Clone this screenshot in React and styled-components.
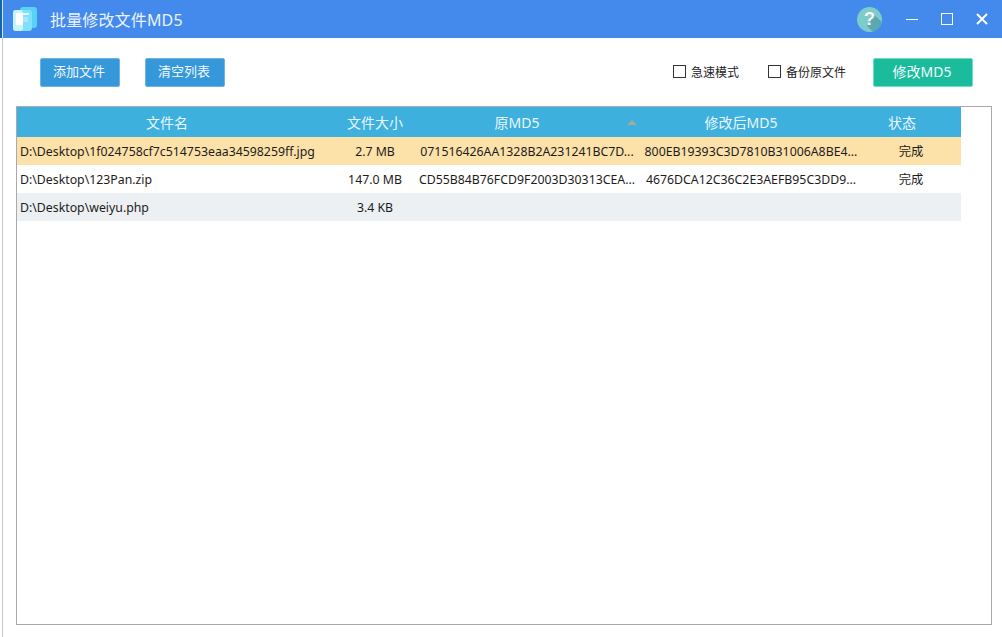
import React from "react";
import styled, { createGlobalStyle } from "styled-components";

const GlobalStyle = createGlobalStyle`
  html, body {
    margin: 0;
    padding: 0;
    background: #fff;
  }
  body {
    font-family: "Noto Sans", "Noto Sans CJK SC", sans-serif;
    color: #1c1c1c;
  }
`;

const Page = styled.div`
  width: 1002px;
  height: 637px;
  display: flex;
  overflow: hidden;
`;

const Edge = styled.div`
  width: 3px;
  flex: none;
  display: flex;
  flex-direction: column;
`;

const EdgeTop = styled.div`
  height: 38px;
  background: linear-gradient(to right, #1268a8 2px, #d8e6f4 2px);
`;

const EdgeRest = styled.div`
  flex: 1;
  background: linear-gradient(to right, #fff 2px, #c9c9c9 2px);
`;

const Main = styled.div`
  flex: 1;
  display: flex;
  flex-direction: column;
`;

const TitleBar = styled.div`
  height: 38px;
  background: #448aec;
  display: flex;
  align-items: center;
  color: #fff;
`;

const LogoBox = styled.div`
  width: 26px;
  height: 26px;
  margin-left: 9px;
  display: flex;
`;

const Title = styled.div`
  margin-left: 12px;
  font-size: 16px;
  letter-spacing: 0.15px;
  flex: 1;
  color: #eaf3ff;
`;

const HelpBadge = styled.div`
  width: 25px;
  height: 25px;
  border-radius: 50%;
  overflow: hidden;
  position: relative;
  background: #7dcccb;
  display: flex;
  align-items: center;
  justify-content: center;
  margin-right: 12px;
`;

const HelpMark = styled.span`
  position: relative;
  font-family: "Liberation Sans", sans-serif;
  font-size: 18px;
  font-weight: 700;
  color: #fff;
`;

const HelpShadow = styled.svg`
  position: absolute;
  inset: 0;
`;

const WinButton = styled.button`
  width: 35px;
  height: 38px;
  padding: 0;
  border: 0;
  background: none;
  display: flex;
  align-items: center;
  justify-content: center;
`;

const WinButtons = styled.div`
  display: flex;
  margin-right: 3px;
`;

const Toolbar = styled.div`
  height: 68px;
  display: flex;
  align-items: center;
  padding: 0 29px 0 37px;
  box-sizing: border-box;
`;

const ActionButton = styled.button`
  width: ${(props) => props.$width || 80}px;
  height: 29px;
  margin-right: 25px;
  border: 1px solid ${(props) => props.$edge || "#6fb3e2"};
  border-radius: 2px;
  background: ${(props) => props.$color || "#3498db"};
  color: #f2f9ff;
  font-family: inherit;
  font-size: ${(props) => props.$size || 13}px;
  padding: 0 2px 3px 0;
`;

const Spacer = styled.div`
  flex: 1;
`;

const CheckLabel = styled.label`
  display: flex;
  align-items: center;
  font-size: 12px;
  margin-right: ${(props) => props.$gap}px;
  color: #222;
  padding-bottom: 1px;
`;

const CheckBox = styled.span`
  width: 11px;
  height: 11px;
  border: 1px solid #333;
  margin-right: 5px;
`;

const SubmitButton = styled(ActionButton)`
  margin-right: 0;
`;

const TableFrame = styled.div`
  margin: 0 10px 0 13px;
  height: 519px;
  border: 1px solid #aaa9ad;
  box-sizing: border-box;
`;

const columns = "318px 80px 224px 224px 98px";

const HeaderRow = styled.div`
  width: 944px;
  height: 30px;
  display: grid;
  grid-template-columns: ${columns};
  background: #3db0de;
  color: #eaf7ff;
  font-size: 14px;
`;

const HeaderCell = styled.div`
  position: relative;
  display: flex;
  align-items: center;
  justify-content: center;
  padding-right: ${(props) => props.$pad || 0}px;
`;

const SortArrow = styled.span`
  position: absolute;
  right: 2px;
  top: 13px;
  width: 0;
  height: 0;
  border-left: 5px solid transparent;
  border-right: 5px solid transparent;
  border-bottom: 5px solid #a9a89e;
`;

const Row = styled.div`
  width: 944px;
  height: 28px;
  display: grid;
  grid-template-columns: ${columns};
  background: ${(props) => props.$bg};
  font-size: 12.3px;
`;

const Cell = styled.div`
  display: flex;
  align-items: center;
  justify-content: ${(props) => (props.$left ? "flex-start" : "center")};
  padding: ${(props) => (props.$left ? "0 0 0 3px" : "0")};
  padding-right: ${(props) => props.$pad || 0}px;
  white-space: nowrap;
`;

const Logo = () => (
  <svg width="26" height="26" viewBox="0 0 26 26">
    <rect x="8" y="1" width="17" height="21" rx="3" fill="#57d2f5" />
    <rect x="1" y="4" width="19" height="21" rx="3" fill="#7fe0fb" />
    <rect x="1" y="4" width="10" height="21" rx="3" fill="#c5f3fe" />
    <rect x="4" y="7" width="7" height="12" fill="#fff" />
    <rect x="11" y="7" width="6" height="2" fill="#e8fbff" />
    <rect x="11" y="11" width="5" height="5" fill="#a8e6f8" />
  </svg>
);

const rows = [
  {
    bg: "#fce1a8",
    name: "D:\\Desktop\\1f024758cf7c514753eaa34598259ff.jpg",
    size: "2.7 MB",
    md5: "071516426AA1328B2A231241BC7D...",
    next: "800EB19393C3D7810B31006A8BE4...",
    state: "完成",
  },
  {
    bg: "#fff",
    name: "D:\\Desktop\\123Pan.zip",
    size: "147.0 MB",
    md5: "CD55B84B76FCD9F2003D30313CEA...",
    next: "4676DCA12C36C2E3AEFB95C3DD9...",
    state: "完成",
  },
  {
    bg: "#ecf0f3",
    name: "D:\\Desktop\\weiyu.php",
    size: "3.4 KB",
    md5: "",
    next: "",
    state: "",
  },
];

export default function App() {
  return (
    <Page>
      <GlobalStyle />
      <Edge>
        <EdgeTop />
        <EdgeRest />
      </Edge>
      <Main>
        <TitleBar>
          <LogoBox>
            <Logo />
          </LogoBox>
          <Title>批量修改文件MD5</Title>
          <HelpBadge>
            <HelpShadow width="25" height="25" viewBox="0 0 25 25">
              <path d="M10 19 L15 6 L25 15 L25 25 L16 25 Z" fill="#5aa8b0" />
            </HelpShadow>
            <HelpMark>?</HelpMark>
          </HelpBadge>
          <WinButtons>
            <WinButton>
              <svg width="12" height="12" viewBox="0 0 12 12">
                <path d="M0 6.5 H12" stroke="#fff" strokeWidth="1" />
              </svg>
            </WinButton>
            <WinButton>
              <svg width="12" height="12" viewBox="0 0 12 12">
                <rect x="0.5" y="0.5" width="11" height="11" fill="none" stroke="#fff" />
              </svg>
            </WinButton>
            <WinButton>
              <svg width="12" height="12" viewBox="0 0 12 12">
                <path d="M1 1 L11 11 M11 1 L1 11" stroke="#fff" strokeWidth="2" />
              </svg>
            </WinButton>
          </WinButtons>
        </TitleBar>
        <Toolbar>
          <ActionButton>添加文件</ActionButton>
          <ActionButton>清空列表</ActionButton>
          <Spacer />
          <CheckLabel $gap={29}>
            <CheckBox />
            急速模式
          </CheckLabel>
          <CheckLabel $gap={27}>
            <CheckBox />
            备份原文件
          </CheckLabel>
          <SubmitButton $width={100} $size={14} $color="#1abc9c" $edge="#6fdcc6">
            修改MD5
          </SubmitButton>
        </Toolbar>
        <TableFrame>
          <HeaderRow>
            <HeaderCell $pad={18}>文件名</HeaderCell>
            <HeaderCell>文件大小</HeaderCell>
            <HeaderCell $pad={20}>
              原MD5
              <SortArrow />
            </HeaderCell>
            <HeaderCell $pad={20}>修改后MD5</HeaderCell>
            <HeaderCell $pad={20}>状态</HeaderCell>
          </HeaderRow>
          {rows.map((row) => (
            <Row key={row.name} $bg={row.bg}>
              <Cell $left>{row.name}</Cell>
              <Cell>{row.size}</Cell>
              <Cell>{row.md5}</Cell>
              <Cell>{row.next}</Cell>
              <Cell $pad={2}>{row.state}</Cell>
            </Row>
          ))}
        </TableFrame>
      </Main>
    </Page>
  );
}
